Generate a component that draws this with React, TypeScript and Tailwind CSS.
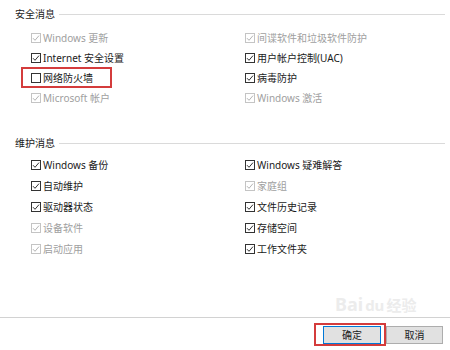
import React from "react";

type Item = { label: string; checked: boolean; disabled?: boolean; mark?: boolean };

const security: Item[][] = [
  [
    { label: "Windows 更新", checked: true, disabled: true },
    { label: "Internet 安全设置", checked: true },
    { label: "网络防火墙", checked: false, mark: true },
    { label: "Microsoft 帐户", checked: true, disabled: true },
  ],
  [
    { label: "间谍软件和垃圾软件防护", checked: true, disabled: true },
    { label: "用户帐户控制(UAC)", checked: true },
    { label: "病毒防护", checked: true },
    { label: "Windows 激活", checked: true, disabled: true },
  ],
];

const maintenance: Item[][] = [
  [
    { label: "Windows 备份", checked: true },
    { label: "自动维护", checked: true },
    { label: "驱动器状态", checked: true },
    { label: "设备软件", checked: true, disabled: true },
    { label: "启动应用", checked: true, disabled: true },
  ],
  [
    { label: "Windows 疑难解答", checked: true },
    { label: "家庭组", checked: true, disabled: true },
    { label: "文件历史记录", checked: true },
    { label: "存储空间", checked: true },
    { label: "工作文件夹", checked: true },
  ],
];

function CheckBox({ checked, disabled }: { checked: boolean; disabled?: boolean }) {
  return (
    <span
      className={`flex items-center justify-center w-[10px] h-[10px] border shrink-0 bg-white ${
        disabled ? "border-[#c4c4c4]" : "border-[#333333]"
      }`}
    >
      {checked && (
        <svg width="8" height="8" viewBox="0 0 8 8" fill="none">
          <path
            d="M1 4.2 L3 6.3 L7 1.6"
            stroke={disabled ? "#b4b4b4" : "#333333"}
            strokeWidth="1"
          />
        </svg>
      )}
    </span>
  );
}

function Row({ item, h }: { item: Item; h: string }) {
  return (
    <div className={`relative flex items-center gap-[2px] ${h}`}>
      <CheckBox checked={item.checked} disabled={item.disabled} />
      <span className={item.disabled ? "text-[#a0a0a0]" : "text-[#1a1a1a]"}>{item.label}</span>
      {item.mark && (
        <span className="absolute left-[-10px] top-[-1px] w-[91px] h-[21px] border-2 border-[#d43c3c]" />
      )}
    </div>
  );
}

function Header({ title, className }: { title: string; className: string }) {
  return (
    <div className={`flex items-center h-[20px] pl-[15px] pr-[5px] ${className}`}>
      <span className="text-[#1a1a1a]">{title}</span>
      <span className="flex-1 ml-[4px] h-px bg-[#dadada]" />
    </div>
  );
}

function Group({ cols, h }: { cols: Item[][]; h: string }) {
  return (
    <div className="grid grid-cols-[214px_1fr] pl-[31px]">
      {cols.map((col, i) => (
        <div key={i} className="flex flex-col">
          {col.map((it) => (
            <Row key={it.label} item={it} h={h} />
          ))}
        </div>
      ))}
    </div>
  );
}

export default function App() {
  return (
    <div
      className="w-[450px] h-[350px] bg-white overflow-hidden flex flex-col text-[10px] leading-none"
      style={{ fontFamily: "'Noto Sans', 'Noto Sans CJK SC', sans-serif" }}
    >
      <Header title="安全消息" className="mt-[4px]" />
      <div className="mt-[4px]">
        <Group cols={security} h="h-[20px]" />
      </div>
      <Header title="维护消息" className="mt-[25px]" />
      <div className="mt-px">
        <Group cols={maintenance} h="h-[21px]" />
      </div>

      <div className="relative mt-[58px] h-px bg-[#d2d2d2]">
        {/* faint watermark */}
        <div className="absolute left-[335px] top-[-22px] flex items-end gap-[2px] text-[#ececec] font-bold text-[18px] select-none">
          <span>Bai</span>
          <span className="text-[15px]">du</span>
          <span className="text-[15px]">经验</span>
        </div>
      </div>

      <div className="flex justify-end gap-[5px] pr-[7px] mt-[8px]">
        <div className="relative">
          <button className="w-[58px] h-[18px] bg-[#e1e1e1] border border-[#0078d7] text-[#1a1a1a] leading-none">
            确定
          </button>
          <span className="absolute left-[-9px] top-[-3px] w-[72px] h-[23px] border-2 border-[#d43c3c]" />
        </div>
        <button className="w-[57px] h-[18px] bg-[#e1e1e1] border border-[#adadad] text-[#1a1a1a] leading-none">
          取消
        </button>
      </div>
    </div>
  );
}
